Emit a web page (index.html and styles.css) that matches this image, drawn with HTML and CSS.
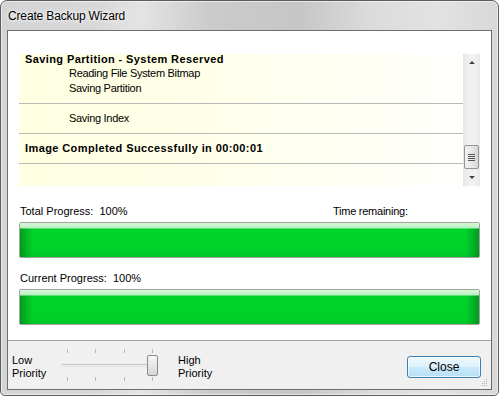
FILE: index.html
```html
<!DOCTYPE html>
<html lang="en">
<head>
  <meta charset="UTF-8" />
  <title>Create Backup Wizard</title>
  <link rel="stylesheet" href="styles.css">
</head>
<body>

  <!-- Window frame -->
  <div class="window">
    <div class="titlebar">Create Backup Wizard</div>

    <div class="client">
      <!-- White content panel -->
      <div class="panel">

        <!-- Operation log with scrollbar -->
        <div class="log">
          <div class="log-list">
            <div class="log-group">
              <div class="log-row bold">Saving Partition - System Reserved</div>
              <div class="log-row sub">Reading File System Bitmap</div>
              <div class="log-row sub">Saving Partition</div>
            </div>
            <div class="log-group">
              <div class="log-row sub">Saving Index</div>
            </div>
            <div class="log-group">
              <div class="log-row bold">Image Completed Successfully in 00:00:01</div>
            </div>
            <div class="log-group"></div>
          </div>
          <div class="scrollbar">
            <div class="arrow up"></div>
            <div class="track">
              <div class="thumb">
                <span></span><span></span><span></span><span></span>
              </div>
            </div>
            <div class="arrow down"></div>
          </div>
        </div>

        <!-- Progress -->
        <div class="progress-label first">
          <span class="label-main">Total Progress:&nbsp;&nbsp;100%</span>
          <span class="label-time">Time remaining:</span>
        </div>
        <div class="progress"><div class="progress-fill"></div></div>

        <div class="progress-label">
          <span class="label-main">Current Progress:&nbsp;&nbsp;100%</span>
        </div>
        <div class="progress"><div class="progress-fill"></div></div>
      </div>

      <!-- Bottom bar -->
      <div class="footer">
        <div class="priority-label">Low<br>Priority</div>
        <div class="slider">
          <div class="ticks"><i></i><i></i><i></i><i></i></div>
          <div class="slider-track">
            <div class="slider-thumb"></div>
          </div>
          <div class="ticks"><i></i><i></i><i></i><i></i></div>
        </div>
        <div class="priority-label high">High<br>Priority</div>
        <button class="close-btn">Close</button>
        <svg class="grip" width="7" height="7" viewBox="0 0 7 7">
          <rect x="5" y="0" width="1" height="1" fill="#b0b0b0"/>
          <rect x="3" y="2" width="1" height="1" fill="#b0b0b0"/>
          <rect x="5" y="2" width="1" height="1" fill="#b0b0b0"/>
          <rect x="1" y="4" width="1" height="1" fill="#b0b0b0"/>
          <rect x="3" y="4" width="1" height="1" fill="#b0b0b0"/>
          <rect x="5" y="4" width="1" height="1" fill="#b0b0b0"/>
          <rect x="1" y="6" width="1" height="1" fill="#b0b0b0"/>
          <rect x="3" y="6" width="1" height="1" fill="#b0b0b0"/>
          <rect x="5" y="6" width="1" height="1" fill="#b0b0b0"/>
        </svg>
      </div>
    </div>
  </div>

</body>
</html>
```

FILE: styles.css
```css
/* Base */
body {
  margin: 0;
  background: #ffffff;
  font-family: 'Liberation Sans', Arial, sans-serif;
  font-size: 11px;
  color: #000;
}

/* Window frame (Aero basic glass look) */
.window {
  box-sizing: border-box;
  width: 499px;
  height: 396px;
  border: 1px solid #5c5c5c;
  border-radius: 7px 7px 5px 5px;
  padding: 0 6px 5px 6px;
  display: flex;
  flex-direction: column;
  background: linear-gradient(to right, #d2d4d6 0%, #d8d8d8 20%, #e4e4e4 28%, #cbcbcb 42%, #c6c6c6 60%, #dcdcdc 75%, #e2e2e2 88%, #d8d8d8 100%);
  box-shadow: inset 0 0 0 1px rgba(255, 255, 255, 0.55);
}
.titlebar {
  flex-shrink: 0;
  height: 29px;
  display: flex;
  align-items: center;
  padding-left: 1px;
  font-size: 12px;
  letter-spacing: -0.15px;
  text-shadow: 0 0 6px #fff, 0 0 3px #fff;
}

/* Client area */
.client {
  flex: 1;
  min-height: 0;
  border: 1px solid #6d6d6d;
  background: #f0f0f0;
  display: flex;
  flex-direction: column;
}
.panel {
  flex-shrink: 0;
  box-sizing: border-box;
  height: 310px;
  background: #fff;
  border-bottom: 1px solid #a0a0a0;
  padding: 23px 0 0 11px;
}

/* Log list */
.log {
  width: 461px;
  height: 132px;
  display: flex;
}
.log-list {
  flex: 1;
  overflow: hidden;
  background: linear-gradient(to right, #ffffe2 0%, #ffffea 45%, #fffff6 80%, #fffffd 100%);
}
.log-group {
  padding: 7px 0;
  border-bottom: 1px solid #b9b9b9;
}
/* first entry is scrolled partly out of view */
.log-group:first-child {
  padding-top: 0;
}
.log-group:first-child .log-row:first-child {
  height: 12px;
  line-height: 10px;
}
.log-group:last-child {
  border-bottom: none;
  height: 30px;
}
.log-row {
  height: 15px;
  line-height: 15px;
  white-space: nowrap;
}
.log-row.bold {
  font-weight: bold;
  letter-spacing: 0.4px;
  padding-left: 6px;
}
.log-row.sub {
  letter-spacing: -0.3px;
  padding-left: 50px;
}

/* Scrollbar */
.scrollbar {
  width: 17px;
  display: flex;
  flex-direction: column;
  background: linear-gradient(to right, #e6e6e6, #f0f0f0 30%, #f2f2f2 70%, #e8e8e8);
}
.arrow {
  height: 17px;
  position: relative;
}
.arrow::after {
  content: "";
  position: absolute;
  left: 6px;
  top: 7px;
  border-left: 3px solid transparent;
  border-right: 3px solid transparent;
}
.arrow.up::after {
  border-bottom: 3px solid #404040;
}
.arrow.down::after {
  border-top: 3px solid #404040;
}
.track {
  flex: 1;
  display: flex;
  flex-direction: column;
  justify-content: flex-end;
}
.thumb {
  margin: 0 1px;
  height: 22px;
  border: 1px solid #959595;
  border-radius: 2px;
  background: linear-gradient(to right, #f2f2f2, #e8e8e8 50%, #d6d6d6);
  display: flex;
  flex-direction: column;
  align-items: center;
  justify-content: center;
  gap: 1px;
}
.thumb span {
  width: 7px;
  height: 1px;
  background: #555;
}

/* Progress bars */
.progress-label {
  height: 15px;
  line-height: 15px;
  margin-top: 13px;
  width: 461px;
  display: flex;
  padding-left: 1px;
}
.progress-label.first {
  margin-top: 18px;
}
.label-main {
  white-space: pre;
}
.label-time {
  margin-left: auto;
  width: 148px;
  letter-spacing: -0.25px;
}
.progress {
  box-sizing: border-box;
  margin-top: 3px;
  width: 461px;
  height: 36px;
  border: 1px solid #a2a2a2;
  border-radius: 2px;
  background: #e6e6e6;
}
.progress-fill {
  height: 100%;
  background:
    linear-gradient(to bottom, #d8f8da 0px, #b8f0c0 5px, transparent 6px),
    linear-gradient(to right, rgba(0, 90, 15, 0.45) 0px, rgba(0, 90, 15, 0) 13px, rgba(0, 90, 15, 0) calc(100% - 13px), rgba(0, 90, 15, 0.45) 100%),
    linear-gradient(to bottom, #00d22c 0%, #00d02a 85%, #00c426 100%);
}

/* Bottom bar */
.footer {
  flex: 1;
  display: flex;
  align-items: flex-start;
  position: relative;
}
.priority-label {
  margin: 13px 0 0 4px;
  line-height: 13px;
  width: 49px;
}
.priority-label.high {
  margin-left: 20px;
}
.slider {
  width: 97px;
  margin-top: 8px;
}
.ticks {
  display: flex;
  padding: 0 5px 0 6px;
  justify-content: space-between;
  height: 4px;
}
.ticks i {
  width: 1px;
  height: 4px;
  background: #b8b8b8;
}
.slider-track {
  height: 22px;
  margin: 1px 0;
  position: relative;
  background: linear-gradient(to bottom, transparent 10px, #c4c4c4 10px, #c4c4c4 11px, #f4f4f4 11px, #f4f4f4 12px, #e0e0e0 12px, #e0e0e0 13px, transparent 13px);
}
.slider-thumb {
  position: absolute;
  right: 0;
  top: 1px;
  box-sizing: border-box;
  width: 11px;
  height: 21px;
  border: 1px solid #8a8a8a;
  border-radius: 2px;
  background: linear-gradient(to bottom, #f8f8f8, #e6e6e6 50%, #d6d6d6);
}
.close-btn {
  margin: 15px 10px 0 auto;
  width: 74px;
  height: 22px;
  border: 1px solid #3c7fb1;
  border-radius: 3px;
  background: linear-gradient(to bottom, #eef8fd 0%, #dff2fc 50%, #c9e9fb 51%, #b6e0f7 100%);
  box-shadow: inset 0 0 0 1px rgba(255, 255, 255, 0.7);
  font-family: 'Liberation Sans', Arial, sans-serif;
  font-size: 12px;
  color: #000;
  padding: 0;
}
.grip {
  position: absolute;
  right: 3px;
  bottom: 3px;
}
```
